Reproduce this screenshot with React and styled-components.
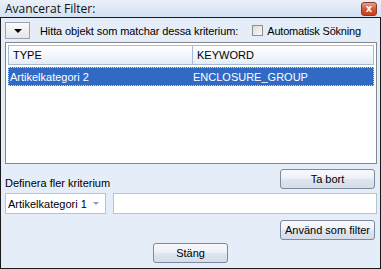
import React from "react";
import styled, { createGlobalStyle } from "styled-components";

const GlobalStyle = createGlobalStyle`
  html, body { margin: 0; padding: 0; background: #e4edf8; }
  body { font-family: "Liberation Sans", Arial, sans-serif; }
  * { box-sizing: border-box; }
`;

const Window = styled.div`
  width: 381px;
  height: 269px;
  display: flex;
  flex-direction: column;
  background: #e4edf8;
  font-family: "Liberation Sans", Arial, sans-serif;
  font-size: 11px;
  color: #000;
`;

const TitleBar = styled.div`
  height: 17px;
  flex: none;
  display: flex;
  align-items: center;
  justify-content: space-between;
  padding: 0 4px 0 5px;
  background: linear-gradient(#e9f0f9, #d3e1f1);
  font-family: "Open Sans", "Noto Sans", sans-serif;
  font-size: 12px;
  color: #111;
`;

const CloseButton = styled.div`
  width: 16px;
  height: 14px;
  margin-top: 1px;
  border: 1px solid #8e3b26;
  border-radius: 3px;
  background: linear-gradient(#eaa08c, #d5563a 50%, #c4401f);
  display: flex;
  align-items: center;
  justify-content: center;
  color: #fff;
  font-size: 10px;
  font-weight: bold;
  font-family: "DejaVu Sans", sans-serif;
  line-height: 1;
`;

const Body = styled.div`
  flex: 1;
  border: 1px solid #1a1a1a;
  display: flex;
  flex-direction: column;
  padding: 4px 4px 0 4px;
`;

const TopRow = styled.div`
  height: 17px;
  display: flex;
  align-items: center;
`;

const MenuButton = styled.div`
  flex: none;
  width: 25px;
  height: 17px;
  border: 1px solid #9aa3ae;
  background: linear-gradient(#fbfbfb, #e6e6e6);
  display: flex;
  align-items: center;
  justify-content: center;
  margin-right: 10px;
`;

const Caret = styled.div`
  width: 0;
  height: 0;
  border-left: 4px solid transparent;
  border-right: 4px solid transparent;
  border-top: 4px solid #000;
`;

const Label = styled.span`
  white-space: nowrap;
  font-family: "Liberation Sans", Arial, sans-serif;
  font-size: 11px;
  letter-spacing: ${(p) => p.$ls || "0"};
`;

const CheckWrap = styled.label`
  flex: none;
  display: flex;
  align-items: center;
  margin-left: 14px;
  gap: 4px;
`;

const Check = styled.span`
  width: 11px;
  height: 11px;
  border: 1px solid #8f8f8f;
  background: linear-gradient(135deg, #dcdcdc, #fafafa);
`;

const List = styled.div`
  margin-top: 3px;
  width: 372px;
  height: 122px;
  border: 1px solid #828790;
  background: #fff;
  padding: 2px 2px 0 2px;
  display: flex;
  flex-direction: column;
`;

const Row = styled.div`
  display: grid;
  grid-template-columns: 183px 1fr;
  height: ${(p) => (p.$header ? "20px" : "19px")};
  margin-bottom: ${(p) => (p.$header ? "2px" : "0")};
  background: ${(p) =>
    p.$header
      ? "linear-gradient(#ffffff, #f1f5fb 60%, #e4ecf7)"
      : p.$selected
      ? "#316ac5"
      : "transparent"};
  border: ${(p) => (p.$header ? "1px solid #a7bad3" : "1px dotted #c9d6ea")};
  color: ${(p) => (p.$selected ? "#fff" : "#000")};
`;

const Cell = styled.div`
  display: flex;
  align-items: center;
  padding-left: ${(p) => (p.$header ? "4px" : "1px")};
  border-left: ${(p) => (p.$divider ? "1px solid #a7bad3" : "none")};
  font-family: "Liberation Sans", Arial, sans-serif;
  font-size: 11px;
  white-space: nowrap;
`;

const MidRow = styled.div`
  margin-top: 5px;
  display: flex;
  align-items: flex-end;
  justify-content: space-between;
  height: 20px;
  padding-right: 1px;
`;

const Button = styled.div`
  flex: none;
  width: ${(p) => p.$w || "95px"};
  height: 20px;
  border: 1px solid #7c8a9c;
  border-radius: 3px;
  background: linear-gradient(#f7f9fc, #eef2f7 45%, #dde4ee 55%, #d5dde8);
  display: flex;
  align-items: center;
  justify-content: center;
  font-family: "Liberation Sans", Arial, sans-serif;
  font-size: 11px;
  white-space: nowrap;
`;

const InputRow = styled.div`
  margin-top: 4px;
  display: flex;
  gap: 7px;
  height: 21px;
`;

const Combo = styled.div`
  flex: none;
  width: 101px;
  height: 21px;
  background: #fff;
  border: 1px solid #b6c3d3;
  display: flex;
  align-items: center;
  justify-content: space-between;
  padding: 0 6px 0 2px;
`;

const SmallCaret = styled.div`
  width: 0;
  height: 0;
  border-left: 3px solid transparent;
  border-right: 3px solid transparent;
  border-top: 3px solid #8c9aab;
`;

const TextField = styled.div`
  flex: none;
  width: 264px;
  height: 21px;
  background: #fff;
  border: 1px solid #b6c3d3;
`;

const RightRow = styled.div`
  margin-top: 6px;
  display: flex;
  justify-content: flex-end;
  padding-right: 1px;
`;

const BottomRow = styled.div`
  margin-top: 3px;
  display: flex;
  padding-left: 148px;
`;

export default function App() {
  return (
    <>
      <GlobalStyle />
      <Window>
        <TitleBar>
          <span>Avancerat Filter:</span>
          <CloseButton>x</CloseButton>
        </TitleBar>
        <Body>
          <TopRow>
            <MenuButton>
              <Caret />
            </MenuButton>
            <Label $ls="-0.1px">Hitta objekt som matchar dessa kriterium:</Label>
            <CheckWrap>
              <Check />
              <Label $ls="-0.2px">Automatisk Sökning</Label>
            </CheckWrap>
          </TopRow>
          <List>
            <Row $header>
              <Cell $header>TYPE</Cell>
              <Cell $header $divider>KEYWORD</Cell>
            </Row>
            <Row $selected>
              <Cell>Artikelkategori 2</Cell>
              <Cell>ENCLOSURE_GROUP</Cell>
            </Row>
          </List>
          <MidRow>
            <Label>Definera fler kriterium</Label>
            <Button>Ta bort</Button>
          </MidRow>
          <InputRow>
            <Combo>
              <Label>Artikelkategori 1</Label>
              <SmallCaret />
            </Combo>
            <TextField />
          </InputRow>
          <RightRow>
            <Button>Använd som filter</Button>
          </RightRow>
          <BottomRow>
            <Button $w="75px">Stäng</Button>
          </BottomRow>
        </Body>
      </Window>
    </>
  );
}
